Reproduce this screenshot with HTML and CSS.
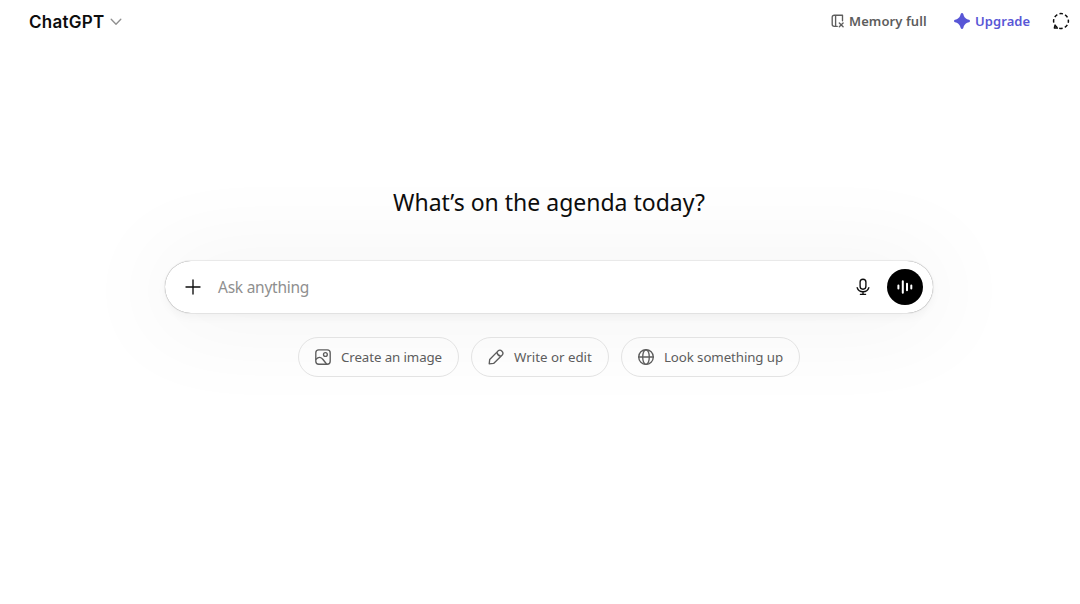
FILE: index.html
```html
<!DOCTYPE html>
<html lang="en">
<head>
<meta charset="utf-8">
<title>ChatGPT</title>
<link rel="stylesheet" href="styles.css">
</head>
<body>
<header class="topbar">
  <button class="model"><span class="model-name">ChatGPT</span>
    <svg class="chevron" width="12" height="8" viewBox="0 0 12 8"><path d="M1.2 1.3 6 6.2l4.800-4.900"/></svg>
  </button>
  <div class="actions">
    <button class="memory">
      <svg width="14" height="14" viewBox="0 0 14 14"><path d="M6.300 12.300H3.200A2 2 0 0 1 1.200 10.300V3.200a2 2 0 0 1 2-2h8.300v5.600M4.600 1.200v11.100M8.300 8.900l3.800 3.800M12.100 8.900l-3.800 3.800"/></svg>
      <span class="memory-label">Memory full</span>
    </button>
    <button class="upgrade">
      <svg width="16" height="16" viewBox="0 0 16 16"><path d="M6.700.9c.4-1.200 2.200-1.200 2.600 0 .9 3.500 2.300 4.900 5.800 5.800 1.200.4 1.200 2.200 0 2.600-3.500.9-4.900 2.300-5.800 5.800-.4 1.200-2.200 1.200-2.600 0C5.800 11.600 4.400 10.200.9 9.300c-1.200-.4-1.200-2.200 0-2.600C4.400 5.800 5.800 4.400 6.700.9Z"/></svg>
      <span class="upgrade-label">Upgrade</span>
    </button>
    <button class="temporary" aria-label="Temporary chat">
      <svg width="18" height="18" viewBox="0 0 18 18"><circle cx="9" cy="9" r="7.400" stroke-dasharray="3.500 2.312" stroke-dashoffset="1.750"/><path d="M1.800 16.100h4.200M2.200 15.800 3.200 13.600"/></svg>
    </button>
  </div>
</header>
<main class="content">
  <h1 class="greeting"><span>What’s on the agenda today?</span></h1>
  <div class="composer">
    <svg class="plus" width="16" height="16" viewBox="0 0 16 16"><path d="M8 1v14M1 8h14"/></svg>
    <span class="placeholder">Ask anything</span>
    <svg class="mic" width="14" height="18" viewBox="0 0 14 18"><rect x="4.100" y="1.200" width="5.800" height="10" rx="2.900"/><path d="M1.200 9.700c.8 2.500 3 4 5.800 4s5-1.500 5.800-4M7 13.700v2.500M4.400 16.300h5.200"/></svg>
    <button class="voice" aria-label="Voice mode">
      <svg width="18" height="16" viewBox="0 0 18 16"><path d="M2.400 6.500v3M6.800 2.200v11.600M11 4.700v6.600M15.300 6.500v3"/></svg>
    </button>
  </div>
  <div class="suggestions">
    <button class="chip image"><svg width="16" height="16" viewBox="0 0 16 16"><rect x=".8" y=".8" width="14.400" height="14.400" rx="3"/><circle cx="10.400" cy="5.500" r="1.900"/><path d="M1 10.200c2.600-2.600 5-2.300 7 .3l3.500 4.500"/></svg><span>Create an image</span></button>
    <button class="chip write"><svg width="16" height="16" viewBox="0 0 16 16"><path d="M1.200 14.800 1.700 10.500 9.900 2.100a2.900 2.900 0 0 1 4.100 4.100l-8.400 8.200ZM9 3.300q.5 3.200 3.700 3.900"/></svg><span>Write or edit</span></button>
    <button class="chip lookup"><svg width="16" height="16" viewBox="0 0 16 16"><circle cx="8" cy="8" r="7.300"/><ellipse cx="8" cy="8" rx="3.300" ry="7.300"/><path d="M.7 8h14.600"/></svg><span>Look something up</span></button>
  </div>
</main>
</body>
</html>
```
FILE: styles.css
```css
* { box-sizing: border-box; }
body {
  margin: 0;
  height: 604px;
  overflow: hidden;
  background: #fff;
  color: #0d0d0d;
  font-family: "Noto Sans", "Open Sans", sans-serif;
}
button {
  display: flex;
  align-items: center;
  padding: 0;
  border: 0;
  background: none;
  color: inherit;
  font: inherit;
  white-space: nowrap;
}
svg {
  flex: none;
  fill: none;
  stroke: currentColor;
  stroke-width: 1.35;
  stroke-linecap: round;
  stroke-linejoin: round;
}
.topbar {
  display: flex;
  justify-content: space-between;
  height: 42px;
  padding: 0 10px 0 29px;
}
.model { height: 43px; gap: 6px; }
.model-name { width: 75px; text-align: left; font: 600 17px/24px Inter, sans-serif; letter-spacing: 0.25px; }
.chevron { color: #8f8f8f; }
.actions { display: flex; align-items: center; font-size: 13px; font-weight: 600; }
.memory { gap: 4px; color: #5d5d5d; }
.memory-label { width: 78px; text-align: left; letter-spacing: 0.08px; }
.upgrade { margin-left: 27px; gap: 5px; color: #5856d6; }
.upgrade svg { fill: currentColor; stroke: none; }
.upgrade-label { width: 55px; text-align: left; letter-spacing: 0.08px; }
.temporary { margin-left: 22px; }
.temporary svg { stroke-linecap: butt; stroke-width: 1.5; }
.content { width: 768px; margin-left: 165px; padding-top: 142px; }
.greeting {
  display: flex;
  justify-content: center;
  margin: 0;
  height: 36px;
  font-size: 23px;
  font-weight: 400;
  line-height: 37px;
  white-space: nowrap;
}
.composer {
  display: flex;
  align-items: center;
  height: 52px;
  margin-top: 41px;
  padding: 0 10px 0 20px;
  border-radius: 26px;
  background: #fff;
  box-shadow: 0 0 1px rgba(0, 0, 0, .62), 0 4px 10px rgba(0, 0, 0, .04), 0 4px 96px 16px rgba(0, 0, 0, .042);
}
.placeholder { margin-left: 17px; color: #8f8f8f; font-size: 15.5px; letter-spacing: -0.25px; }
.mic { margin-left: auto; }
.voice { justify-content: center; width: 36px; height: 36px; margin-left: 17px; border-radius: 50%; background: #000; color: #fff; }
.voice svg { stroke-width: 2; }
.suggestions { display: flex; justify-content: center; gap: 12px; margin-top: 24px; }
.chip {
  height: 40px;
  gap: 10px;
  padding: 0 16px;
  border: 1px solid #e3e3e3;
  border-radius: 20px;
  color: #5d5d5d;
  font-size: 13.3px;
  letter-spacing: -0.1px;
}
.image { width: 161px; }
.write { width: 138px; letter-spacing: 0; }
.lookup { width: 179px; }
```
